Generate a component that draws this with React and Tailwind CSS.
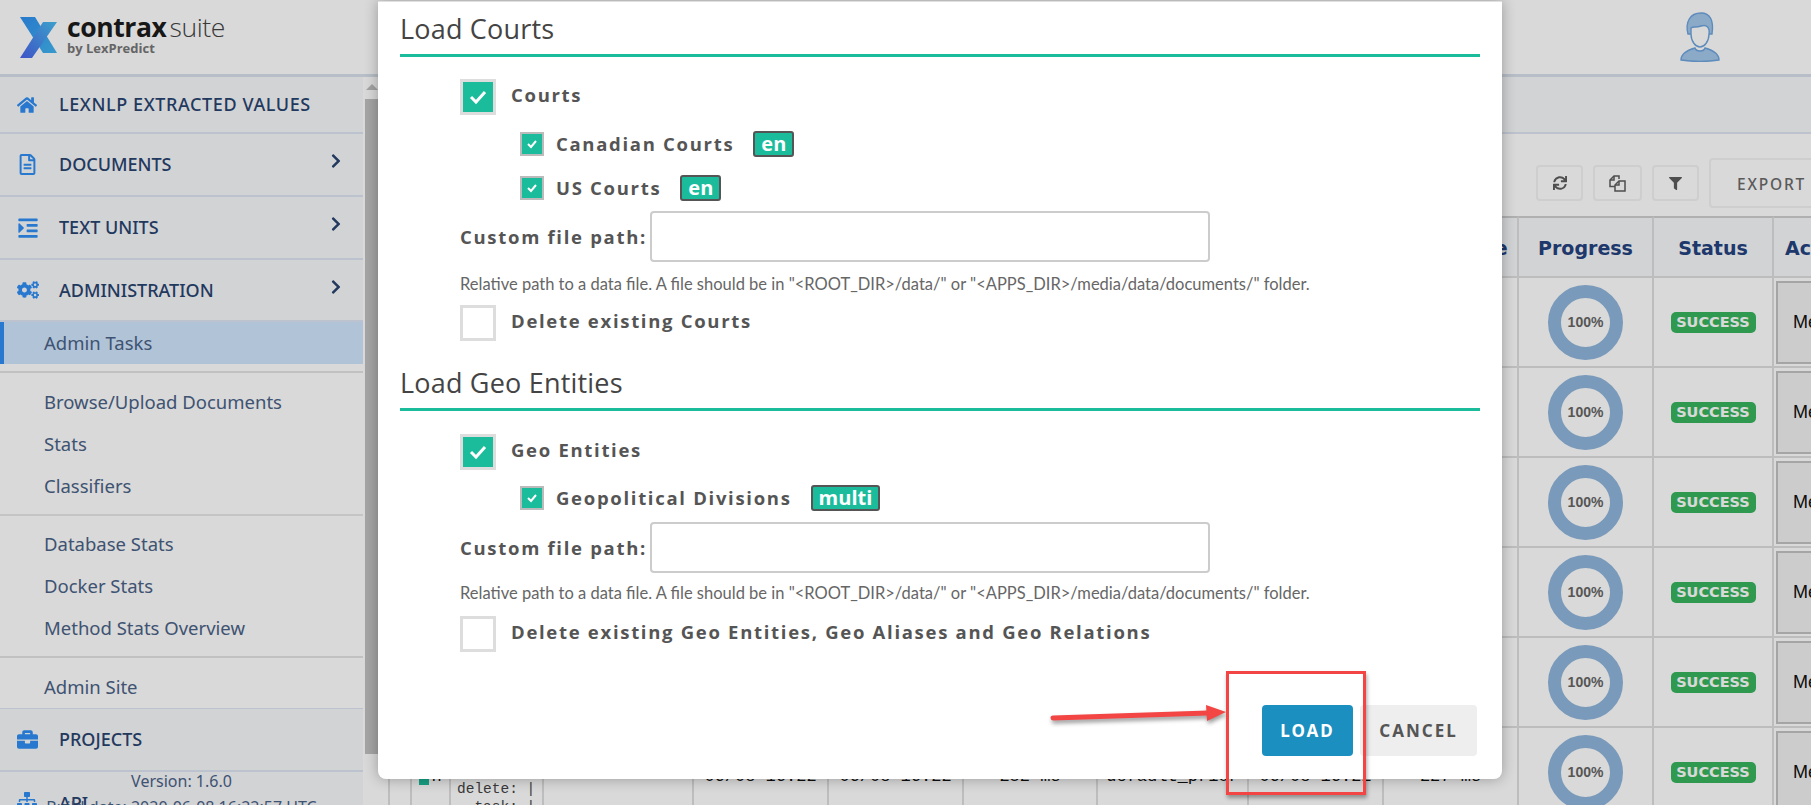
import {
  FaHome,
  FaRegFileAlt,
  FaIndent,
  FaCogs,
  FaBriefcase,
  FaSitemap,
  FaChevronRight,
  FaSync,
  FaFilter,
} from "react-icons/fa";

const NAV_FONT = "font-['Noto_Sans',sans-serif]";
const FORM_FONT = "font-['Lato',sans-serif]";
const TABLE_FONT = "font-['DejaVu_Sans',sans-serif]";
const LABEL = "font-['Open_Sans',sans-serif] text-[18.5px] font-bold tracking-[1.7px] text-[#555]";

function Logo() {
  return (
    <div className="mb-[3px] flex items-center gap-[10px] pl-[20px]">
      <svg width="37" height="41" viewBox="0 0 37 41" className="mt-[3px]">
        <defs>
          <linearGradient id="logoBack" x1="0" y1="0" x2="1" y2="1">
            <stop offset="0" stopColor="#2f8ff0" />
            <stop offset="1" stopColor="#43b5f0" />
          </linearGradient>
          <linearGradient id="logoFront" x1="1" y1="0" x2="0" y2="1">
            <stop offset="0" stopColor="#46bdf0" />
            <stop offset="1" stopColor="#4a63ea" />
          </linearGradient>
        </defs>
        <polygon points="0,0 15,0 37,36 23,36" fill="url(#logoBack)" />
        <polygon points="37,5 23,5 0,41 12,41" fill="url(#logoFront)" />
      </svg>
      <div className="flex flex-col font-['Open_Sans',sans-serif]">
        <div className="text-[26.5px] leading-[26px] tracking-[-0.4px] text-[#1c1c1c]">
          <span className="font-bold">contrax</span>
          <span className="ml-[3px] font-light text-[#444]">suite</span>
        </div>
        <div className="text-[13px] leading-[17px] font-bold text-[#777]">by LexPredict</div>
      </div>
    </div>
  );
}

function Avatar() {
  return (
    <svg width="48" height="50" viewBox="0 0 48 50" fill="none" stroke="#6ea4dc" strokeWidth="1.4">
      <path d="M5 48C5 42 12 38 19 36C20 40 28 40 29 36C36 38 43 42 43 48C30 50 18 50 5 48Z" fill="#a4c8ec" />
      <path d="M12 22C9 10 14 1 25 1C34 1 38 8 36 22L33 22L15 22Z" fill="#a4c8ec" />
      <path d="M15 16C17 14 20 16 25 14C31 12 34 16 33 22C33 30 28 35 24 35C20 35 15 30 15 22Z" fill="#fff" />
    </svg>
  );
}

function CopyIcon() {
  return (
    <svg width="17" height="17" viewBox="0 0 17 17" fill="none" stroke="#5c5c5c" strokeWidth="1.5">
      <path d="M10 4V1H5L1 5V11.5H6" />
      <path d="M5 1V5H1" />
      <path d="M16 6H10L6 10V16H16Z" />
      <path d="M10 6V10H6" />
    </svg>
  );
}

function NavItem({ icon, label, chevron, className, labelClass = "" }) {
  return (
    <div className={`flex items-center pl-[17px] bg-[#f7f8fb] border-b-2 border-[#dde6f3] ${className}`}>
      <span className="w-[42px] text-[#2e8ef3]">{icon}</span>
      <span className={`text-[18px] font-medium text-[#29436f] ${labelClass}`}>{label}</span>
      {chevron && <FaChevronRight className="ml-auto mr-[19px] mb-[7px] text-[#29436f]" size={16} />}
    </div>
  );
}

function SubItem({ label }) {
  return <div className="flex h-[42px] items-center pl-[44px] text-[18.5px] text-[#4a6286]">{label}</div>;
}

function Sidebar() {
  return (
    <aside className="flex w-[378px] shrink-0">
      <nav className={`relative w-[363px] ${NAV_FONT}`}>
        <NavItem className="h-[57px]" labelClass="tracking-[0.6px]" icon={<FaHome size={20} />} label="LEXNLP EXTRACTED VALUES" />
        <NavItem className="h-[63px]" icon={<FaRegFileAlt size={21} />} label="DOCUMENTS" chevron />
        <NavItem className="h-[63px]" icon={<FaIndent size={22} />} label="TEXT UNITS" chevron />
        <NavItem className="h-[62px] border-b-0" icon={<FaCogs size={22} />} label="ADMINISTRATION" chevron />
        <div className="border-b-2 border-[#e3e3e3] pb-[7px]">
          <div className="flex h-[42px] items-center border-l-4 border-[#2e8ef3] bg-[#d0e6fd] pl-[40px] text-[18.5px] text-[#4a6286]">
            Admin Tasks
          </div>
        </div>
        <div className="border-b-2 border-[#e8e8e8] pt-[8px] pb-[7px]">
          <SubItem label="Browse/Upload Documents" />
          <SubItem label="Stats" />
          <SubItem label="Classifiers" />
        </div>
        <div className="border-b-2 border-[#e3e3e3] pt-[7px] pb-[7px]">
          <SubItem label="Database Stats" />
          <SubItem label="Docker Stats" />
          <SubItem label="Method Stats Overview" />
        </div>
        <div className="border-b border-[#dde6f3] pt-[8px]">
          <SubItem label="Admin Site" />
        </div>
        <NavItem className="h-[63px]" icon={<FaBriefcase size={21} />} label="PROJECTS" />
        <NavItem className="h-[60px] items-start pt-[18px]" icon={<FaSitemap size={20} />} label="API" />
        <div className="absolute top-[691px] left-0 w-full text-center text-[16px] leading-[26px] text-[#4a6286]">
          <div>Version: 1.6.0</div>
          <div>Build date: 2020-06-08 16:22:57 UTC</div>
        </div>
      </nav>
      <div className="ml-[2px] flex w-[13px] flex-col items-center pt-[7px]">
        <div className="mb-[9px] h-0 w-0 border-x-[6px] border-b-[6px] border-x-transparent border-b-[#c0c0c0]" />
        <div className="h-[655px] w-full bg-[#c2c2c2]" />
      </div>
    </aside>
  );
}

const columns = [
  { label: "", width: "w-[24px]" },
  { label: "", width: "w-[39px]" },
  { label: "Metadata", width: "w-[93px]" },
  { label: "Name", width: "w-[150px]" },
  { label: "Date Start", width: "w-[135px]" },
  { label: "Date Work Start", width: "w-[135px]" },
  { label: "Duration", width: "w-[134px]" },
  { label: "Queue", width: "w-[151px]" },
  { label: "Date Done", width: "w-[135px]" },
  { label: "Work Time", width: "w-[135px]" },
  { label: "Progress", width: "w-[135px]" },
  { label: "Status", width: "w-[120px]" },
  { label: "Action", width: "w-[92px]" },
];

const rows = [1, 2, 3, 4, 5, 6];
const cell = "border-r-2 border-b-2 border-[#dedede] text-center";
const dataCell = `${cell} pt-[9px] font-['Liberation_Mono',monospace] text-[17px] whitespace-nowrap text-[#111]`;

function TaskTable() {
  return (
    <table className={`ml-[10px] w-[1452px] table-fixed border-separate border-spacing-0 ${TABLE_FONT}`}>
      <colgroup>
        {columns.map((c, i) => (
          <col key={i} className={c.width} />
        ))}
      </colgroup>
      <thead>
        <tr className="h-[62px] bg-[#f7f8fb]">
          {columns.map((c, i) => (
            <th
              key={i}
              className="border-t-2 border-r-2 border-b-2 border-t-[#cfcfcf] border-r-[#dedede] border-b-[#dedede] pt-[3px] text-[19px] whitespace-nowrap font-bold text-[#24427f]"
            >
              {c.label}
            </th>
          ))}
        </tr>
      </thead>
      <tbody>
        {rows.map((r) => (
          <tr key={r} className="h-[90px]">
            <td className={`${cell} border-l-2`}></td>
            <td className={dataCell}>
              <span className="inline-block h-[18px] w-[10px] bg-[#1abc9c] align-middle" />
              <span className="ml-[2px]">n</span>
            </td>
            <td className={`${cell} align-top`}>
              <pre className="-mt-[2px] h-[88px] overflow-hidden pl-[6px] text-left font-['Liberation_Mono',monospace] text-[14.5px] leading-[18px] text-[#444]">
                {"kwargs:\n  force: |\n  load: |\ndelete: |\n  task: |"}
              </pre>
            </td>
            <td className={dataCell}></td>
            <td className={dataCell}>06/08 16:22</td>
            <td className={dataCell}>06/08 16:22</td>
            <td className={dataCell}>252 ms</td>
            <td className={dataCell}>default_prior</td>
            <td className={dataCell}>06/08 16:22</td>
            <td className={dataCell}>227 ms</td>
            <td className={cell}>
              <div className="mx-auto flex h-[75px] w-[75px] items-center justify-center rounded-full border-[13px] border-[#8fb5db] font-['Liberation_Sans',sans-serif] text-[14px] font-bold text-[#666]">
                100%
              </div>
            </td>
            <td className={cell}>
              <span className="inline-block h-[21px] w-[85px] rounded-[5px] bg-[#38b55d] text-[14.5px] leading-[21px] font-bold text-white">
                SUCCESS
              </span>
            </td>
            <td className={`${cell} pl-[2px] text-left`}>
              <div className="flex h-[83px] w-[120px] items-center border-2 border-[#c2c2c2] bg-[#f0f0f0] pl-[15px] font-['Liberation_Sans',sans-serif] text-[18px] text-[#111]">
                Menu
              </div>
            </td>
          </tr>
        ))}
      </tbody>
    </table>
  );
}

function ToolButton({ className, children }) {
  return (
    <button className={`flex h-[36px] items-center justify-center rounded-[4px] border-2 border-[#f2f2f2] text-[#5c5c5c] ${className}`}>
      {children}
    </button>
  );
}

function Main() {
  return (
    <main className="min-w-0 flex-1 overflow-hidden">
      <div className="h-[57px] border-b-2 border-[#dde6f3] bg-[#f7f8fb]" />
      <div className="flex h-[82px] w-[1500px] items-center gap-[10px] pt-[16px] pl-[1158px]">
        <ToolButton className="w-[47px] shrink-0">
          <FaSync size={14} />
        </ToolButton>
        <ToolButton className="w-[49px] shrink-0">
          <CopyIcon />
        </ToolButton>
        <ToolButton className="w-[47px] shrink-0">
          <FaFilter size={13} />
        </ToolButton>
        <button className={`h-[50px] w-[130px] shrink-0 rounded-[4px] border-2 border-[#f2f2f2] pt-[3px] pl-[26px] text-left text-[15.5px] font-medium tracking-[1.8px] whitespace-nowrap text-[#6a6a6a] ${NAV_FONT}`}>
          EXPORT
        </button>
      </div>
      <TaskTable />
    </main>
  );
}

function Check({ large, checked }) {
  if (!checked) {
    return <span className="block h-[36px] w-[36px] shrink-0 border-[3px] border-[#ddd]" />;
  }
  if (large) {
    return (
      <span className="flex h-[36px] w-[36px] shrink-0 items-center justify-center border-[3px] border-[#ddd] bg-[#1abc9c]">
        <svg width="20" height="16" viewBox="0 0 20 16" fill="none" stroke="#fff" strokeWidth="3">
          <path d="M3 8L8 13L17 3" />
        </svg>
      </span>
    );
  }
  return (
    <span className="flex h-[24px] w-[24px] shrink-0 items-center justify-center border-2 border-[#bbb] bg-[#1abc9c]">
      <svg width="12" height="10" viewBox="0 0 12 10" fill="none" stroke="#fff" strokeWidth="2">
        <path d="M2 5L5 8L10 2" />
      </svg>
    </span>
  );
}

function SectionTitle({ children, className }) {
  return (
    <h2 className={`flex h-[55px] items-center border-b-[3px] border-[#1abc9c] pt-[2px] font-['Open_Sans',sans-serif] text-[27px] tracking-[0.2px] text-[#444] ${className}`}>
      {children}
    </h2>
  );
}

function CheckRow({ label, checked, className }) {
  return (
    <div className={`flex h-[36px] items-center gap-[15px] pl-[60px] ${className}`}>
      <Check large checked={checked} />
      <span className={`mb-[5px] ${LABEL}`}>{label}</span>
    </div>
  );
}

function SubRow({ label, badge, className }) {
  return (
    <div className={`flex h-[26px] items-center pl-[120px] ${className}`}>
      <Check checked />
      <span className={`ml-[12px] ${LABEL}`}>{label}</span>
      <span className="ml-[19px] flex h-[26px] items-center rounded-[3px] border-2 border-[#555] bg-[#1abc9c] px-[6px] font-['Open_Sans',sans-serif] text-[20px] font-bold text-white">
        {badge}
      </span>
    </div>
  );
}

function PathRow({ className }) {
  return (
    <div className={`flex items-center pl-[60px] ${className}`}>
      <label className={`w-[190px] shrink-0 whitespace-nowrap ${LABEL}`}>Custom file path:</label>
      <input className="h-[51px] w-[560px] rounded-[4px] border-2 border-[#ccc] bg-white" />
    </div>
  );
}

function HelpText({ className }) {
  return (
    <p className={`h-[20px] pl-[60px] text-[16.5px] leading-[20px] text-[#666] ${className}`}>
      {'Relative path to a data file. A file should be in "<ROOT_DIR>/data/" or "<APPS_DIR>/media/data/documents/" folder.'}
    </p>
  );
}

function LoadModal() {
  return (
    <div className={`absolute top-[1px] left-[378px] h-[778px] w-[1124px] rounded-b-[8px] border-t border-[#e0e0e0] bg-white px-[22px] shadow-[0_0_14px_rgba(0,0,0,0.3)] ${FORM_FONT}`}>
      <SectionTitle>Load Courts</SectionTitle>
      <CheckRow className="mt-[22px]" label="Courts" checked />
      <SubRow className="mt-[16px]" label="Canadian Courts" badge="en" />
      <SubRow className="mt-[18px]" label="US Courts" badge="en" />
      <PathRow className="mt-[10px]" />
      <HelpText className="mt-[12px]" />
      <CheckRow className="mt-[11px]" label="Delete existing Courts" />

      <SectionTitle className="mt-[15px]">Load Geo Entities</SectionTitle>
      <CheckRow className="mt-[23px]" label="Geo Entities" checked />
      <SubRow className="mt-[15px]" label="Geopolitical Divisions" badge="multi" />
      <PathRow className="mt-[11px]" />
      <HelpText className="mt-[10px]" />
      <CheckRow className="mt-[13px]" label="Delete existing Geo Entities, Geo Aliases and Geo Relations" />

      <div className={`mt-[53px] flex justify-end gap-[7px] pr-[3px] ${NAV_FONT}`}>
        <button className="h-[51px] w-[91px] rounded-[4px] bg-[#1a8fc0] text-[17px] font-bold tracking-[2px] text-white">LOAD</button>
        <button className="h-[51px] w-[117px] rounded-[4px] bg-[#eee] text-[17px] font-bold tracking-[2px] text-[#555]">CANCEL</button>
      </div>
    </div>
  );
}

// red annotation drawn over the screenshot
function Annotation() {
  return (
    <>
      <svg className="absolute top-[700px] left-[1048px] drop-shadow-[1px_3px_2px_rgba(0,0,0,0.4)]" width="182" height="28" viewBox="0 0 182 28">
        <path d="M5 18L160 13" stroke="#f44545" strokeWidth="5" strokeLinecap="round" />
        <polygon points="158,5 178,12 159,21" fill="#f44545" />
      </svg>
      <div className="absolute top-[671px] left-[1226px] h-[124px] w-[140px] border-[3px] border-[#f44545] shadow-[1px_3px_4px_rgba(0,0,0,0.35)]" />
    </>
  );
}

export default function App() {
  return (
    <div className="relative h-[805px] w-[1811px] overflow-hidden bg-white">
      <header className="flex h-[77px] items-center justify-between border-b-[3px] border-[#d8e0ea] pr-[87px]">
        <Logo />
        <Avatar />
      </header>
      <div className="flex">
        <Sidebar />
        <Main />
      </div>
      <div className="absolute inset-0 bg-black/15" />
      <LoadModal />
      <Annotation />
    </div>
  );
}
